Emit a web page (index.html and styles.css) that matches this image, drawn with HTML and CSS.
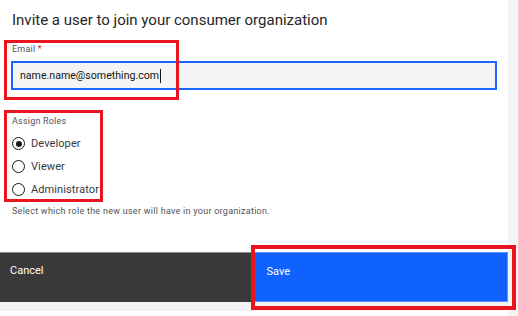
FILE: index.html
```html
<!DOCTYPE html>
<html>
<head>
<meta charset="utf-8">
<link rel="stylesheet" href="styles.css">
</head>
<body>
<div class="page">
  <div class="main">
    <h1 class="title">Invite a user to join your consumer organization</h1>
    <div class="field">
      <div class="label">Email <span class="req">*</span></div>
      <div class="input"><span class="value">name.name@something.com</span><span class="caret"></span></div>
    </div>
    <div class="roles">
      <div class="label roles-label">Assign Roles</div>
      <div class="radio"><span class="circle checked"></span><span>Developer</span></div>
      <div class="radio"><span class="circle"></span><span>Viewer</span></div>
      <div class="radio"><span class="circle"></span><span>Administrator</span></div>
    </div>
    <p class="helper">Select which role the new user will have in your organization.</p>
    <div class="footer">
      <div class="btn cancel">Cancel</div>
      <div class="btn save">Save</div>
    </div>
    <div class="band"></div>
  </div>
  <div class="scroll"></div>
  <div class="mark mark-email"></div>
  <div class="mark mark-roles"></div>
  <div class="mark mark-save"></div>
</div>
</body>
</html>
```

FILE: styles.css
```css
* { box-sizing: border-box; }
html, body { margin: 0; padding: 0; background: #fff; }
body { font-family: Roboto, "Noto Sans", sans-serif; color: #161616; }
.page { position: relative; display: flex; width: 518px; height: 316px; overflow: hidden; }
.main { flex: 1; display: flex; flex-direction: column; }
.scroll { width: 10px; background: #f4f4f4; }
.title { margin: 10px 0 0 12px; font-size: 15px; line-height: 20px; font-weight: 400; color: #262626; }
.field { margin: 12px 0 0 12px; width: 485px; }
.label { font-size: 9px; line-height: 14px; color: #525252; letter-spacing: 0.2px; }
.req { color: #da1e28; }
.input { margin: 5px 0 0 -1px; height: 29px; background: #f4f4f4; border: 2px solid #1a66fe; display: flex; align-items: center; padding-left: 7px; font-size: 10.6px; color: #161616; }
.caret { display: inline-block; width: 1px; height: 14px; background: #161616; margin-left: 1px; }
.roles { margin: 24px 0 0 12px; display: flex; flex-direction: column; }
.roles-label { margin-bottom: 4px; }
.radio { display: flex; align-items: center; height: 23px; font-size: 11px; color: #393939; letter-spacing: 0.1px; }
.circle { width: 13px; height: 13px; border: 1.5px solid #161616; border-radius: 50%; margin-right: 6px; display: flex; align-items: center; justify-content: center; }
.circle.checked::after { content: ""; width: 6px; height: 6px; border-radius: 50%; background: #161616; }
.helper { margin: 3px 0 0 12px; font-size: 9px; line-height: 14px; color: #525252; letter-spacing: 0.27px; }
.footer { margin-top: 34px; display: flex; height: 50px; }
.btn { flex: 1; color: #fff; font-size: 11px; padding: 11px 10px 0; }
.cancel { background: #393939; border-top: 1px solid #8d8d8d; }
.save { background: #0f62fe; margin-left: 3px; padding-left: 12px; padding-top: 12px; border: 1px solid #5a93ff; }
.band { height: 9px; background: #f2f2f2; }
.mark { position: absolute; border: 3.5px solid #e8141f; }
.mark-email { left: 4px; top: 40px; width: 175px; height: 60px; }
.mark-roles { left: 4px; top: 110px; width: 99px; height: 92px; }
.mark-save { left: 251px; top: 245px; width: 265px; height: 65px; border-width: 4px; }
```
